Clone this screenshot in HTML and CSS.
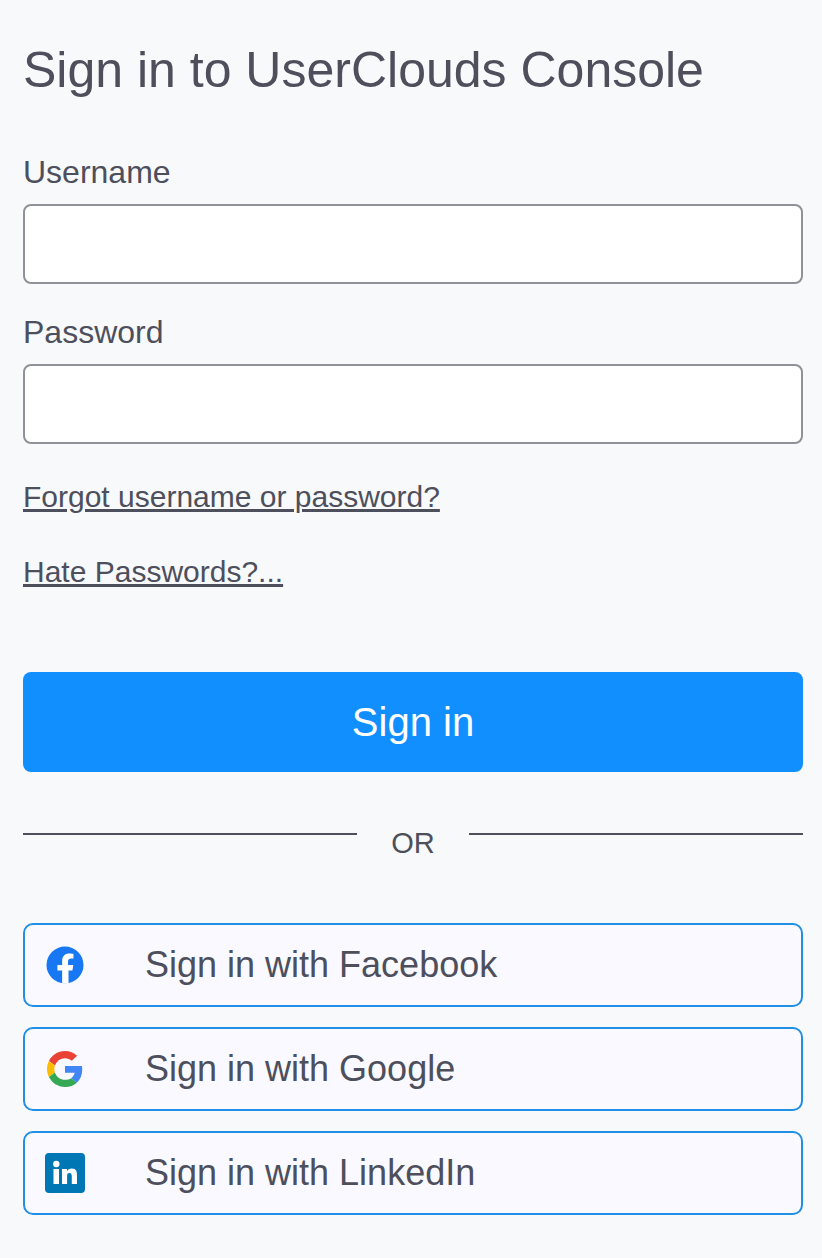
FILE: index.html
```html
<!DOCTYPE html>
<html lang="en">
<head>
    <meta charset="UTF-8">
    <meta name="viewport" content="width=device-width, initial-scale=1.0">
    <title>Sign in to UserClouds Console</title>
    <link rel="stylesheet" href="styles.css">
</head>
<body>
    <div class="login">
        <h1>Sign in to UserClouds Console</h1>

        <form class="login-form">
            <div class="field">
                <label for="username">Username</label>
                <input type="text" id="username">
            </div>
            <div class="field">
                <label for="password">Password</label>
                <input type="password" id="password">
            </div>
            <p class="link-row"><a href="#">Forgot username or password?</a></p>
            <p class="link-row link-row-last"><a href="#">Hate Passwords?...</a></p>
            <button type="button" class="submit">Sign in</button>
        </form>

        <div class="divider">
            <span class="divider-line"></span>
            <span class="divider-text">OR</span>
            <span class="divider-line"></span>
        </div>

        <div class="social">
            <a href="#" class="social-button">
                <svg class="social-icon" viewBox="0 0 40 40">
                    <circle cx="20" cy="20" r="19.500" fill="#1877f2"/>
                    <path fill="#fff" d="M27.800 25.700l.9-5.700h-5.500v-3.700c0-1.600.8-3.100 3.200-3.100h2.500V8.300s-2.300-.4-4.400-.4c-4.500 0-7.500 2.700-7.500 7.700V20h-5v5.700h5v13.900c1 .2 2 .2 3.100.2s2.600-.1 3.600-.2V25.700z"/>
                </svg>
                <span>Sign in with Facebook</span>
            </a>
            <a href="#" class="social-button">
                <svg class="social-icon social-icon-google" viewBox="0 0 48 48">
                    <path fill="#ea4335" d="M24 9.500c3.500 0 6.700 1.200 9.200 3.600l6.900-6.900C35.900 2.400 30.500 0 24 0 14.600 0 6.500 5.400 2.600 13.200l8 6.200C12.400 13.700 17.700 9.500 24 9.500z"/>
                    <path fill="#4285f4" d="M46.980 24.550c0-1.570-.15-3.090-.38-4.550H24v9.020h12.940c-.58 2.960-2.260 5.480-4.780 7.180l7.730 6c4.510-4.180 7.090-10.360 7.090-17.650z"/>
                    <path fill="#fbbc05" d="M10.530 28.590c-.48-1.450-.76-2.990-.76-4.590s.27-3.140.76-4.590l-7.980-6.190C.92 16.460 0 20.120 0 24c0 3.880.92 7.540 2.560 10.780l7.970-6.190z"/>
                    <path fill="#34a853" d="M24 48c6.480 0 11.930-2.130 15.890-5.810l-7.730-6c-2.150 1.450-4.920 2.300-8.160 2.300-6.260 0-11.570-4.220-13.470-9.910l-7.980 6.190C6.510 42.620 14.620 48 24 48z"/>
                </svg>
                <span>Sign in with Google</span>
            </a>
            <a href="#" class="social-button">
                <svg class="social-icon social-icon-linkedin" viewBox="0 0 40 40">
                    <rect width="40" height="40" rx="4" fill="#0077b5"/>
                    <circle cx="11.300" cy="11" r="3.200" fill="#fff"/>
                    <rect x="8.500" y="16" width="5.500" height="15" fill="#fff"/>
                    <path fill="#fff" d="M17 16h5v2.200c.8-1.400 2.400-2.600 4.800-2.600 4.500 0 5.200 3 5.200 7V31h-5.200v-7.400c0-1.900-.3-3.500-2.300-3.500-2.200 0-2.400 1.700-2.400 3.500V31H17z"/>
                </svg>
                <span>Sign in with LinkedIn</span>
            </a>
        </div>
    </div>
</body>
</html>
```

FILE: styles.css
```css
* {
    box-sizing: border-box;
}

body {
    font-family: "Liberation Sans", Arial, sans-serif;
    margin: 0;
    background-color: #f8f9fa;
    color: #4d4f5c;
}

.login {
    padding: 40px 19px 43px 23px;
}

h1 {
    margin: 0 0 54px;
    font-size: 50px;
    line-height: 60px;
    font-weight: 400;
}

.field {
    margin-bottom: 30px;
}

label {
    display: block;
    font-size: 32px;
    line-height: 36px;
    margin-bottom: 14px;
}

input {
    display: block;
    width: 100%;
    height: 80px;
    background: #fff;
    border: 2px solid #8f9296;
    border-radius: 8px;
}

.link-row {
    margin: 0 0 29px;
    font-size: 30px;
    line-height: 46px;
}

.link-row-last {
    margin-bottom: 77px;
}

a {
    color: #4d4f5c;
}

.submit {
    display: block;
    width: 100%;
    height: 100px;
    background-color: #118fff;
    color: #fff;
    border: 0;
    border-radius: 8px;
    font-family: inherit;
    font-size: 40px;
}

.divider {
    display: flex;
    align-items: flex-start;
    margin: 60px 0 69px;
}

.divider-line {
    flex: 1;
    height: 2px;
    margin-top: 1px;
    background-color: #4d4f5c;
}

.divider-text {
    width: 112px;
    text-align: center;
    font-size: 29px;
    line-height: 22px;
}

.social {
    display: flex;
    flex-direction: column;
    gap: 20px;
}

.social-button {
    display: flex;
    align-items: center;
    height: 84px;
    padding-left: 21px;
    background-color: #f9f9ff;
    border: 2px solid #2090e6;
    border-radius: 10px;
    font-size: 36px;
    text-decoration: none;
}

.social-icon {
    width: 38px;
    height: 38px;
    margin-right: 61px;
    flex-shrink: 0;
}

.social-icon-google {
    width: 36px;
    height: 36px;
    margin-left: 1px;
    margin-right: 62px;
}

.social-icon-linkedin {
    width: 40px;
    height: 40px;
    margin-left: -1px;
    margin-right: 60px;
}
```
